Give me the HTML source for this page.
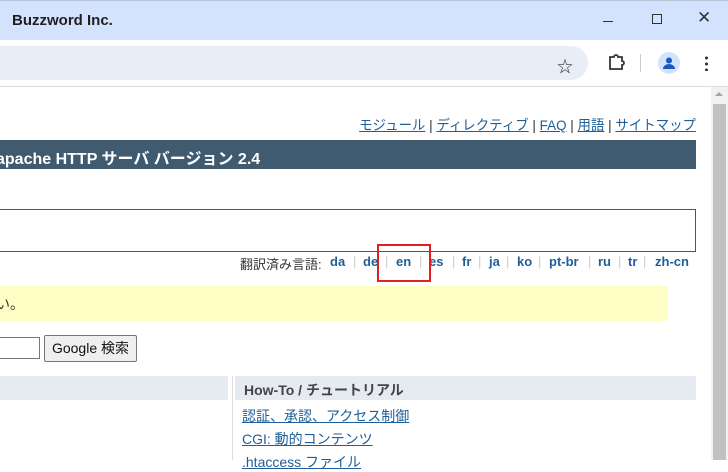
<!DOCTYPE html>
<html><head><meta charset="utf-8"><style>
*{margin:0;padding:0;box-sizing:border-box}
body{width:728px;height:460px;overflow:hidden;background:#fff;font-family:"Liberation Sans","Noto Sans CJK JP",sans-serif;position:relative}
.a{position:absolute}
.lk{color:#1f5f99;text-decoration:underline;font-size:14px}
.l{position:absolute;top:254px;font-size:13px;font-weight:bold;color:#1f5f99}
.s{position:absolute;top:254px;font-size:13px;color:#ccc}
</style></head><body>
<div class="a" style="left:0;top:0;width:728px;height:40px;background:#d3e3fd;border-top:1px solid #b8c4d6"></div>
<div class="a" style="left:12px;top:12px;font-size:15px;font-weight:bold;color:#1f1f1f">Buzzword Inc.</div>
<div class="a" style="left:603px;top:21px;width:10px;height:1px;background:#333"></div>
<div class="a" style="left:652px;top:14px;width:10px;height:10px;border:1px solid #333"></div>
<div class="a" style="left:697px;top:8px;font-size:17px;color:#333">✕</div>
<div class="a" style="left:0;top:40px;width:728px;height:47px;background:#fff;border-bottom:1px solid #dcdcdc"></div>
<div class="a" style="left:-30px;top:46px;width:618px;height:34px;background:#e9eef6;border-radius:17px"></div>
<div class="a" style="left:557px;top:53px;font-size:16px;color:#333">☆</div>
<svg class="a" style="left:606px;top:53px" width="20" height="20" viewBox="0 0 20 20"><path d="M4 4h4a2 2 0 0 1 4 0h4v4a2 2 0 0 1 0 4v4H4z" fill="none" stroke="#333" stroke-width="1.8"/></svg>
<div class="a" style="left:640px;top:54px;width:1px;height:18px;background:#ccc"></div>
<div class="a" style="left:658px;top:52px;width:22px;height:22px;border-radius:50%;background:#d3e3fd"></div>
<svg class="a" style="left:658px;top:52px" width="22" height="22"><circle cx="11" cy="8.5" r="3" fill="#1a57c0"/><path d="M5 17a6 5 0 0 1 12 0z" fill="#1a57c0"/></svg>
<div class="a" style="left:705px;top:55px;width:3px;height:16px;background:radial-gradient(circle,#333 1.4px,transparent 1.6px) 0 0/3px 6px"></div>
<div class="a" style="left:711px;top:87px;width:17px;height:373px;background:#f1f1f1"></div>
<div class="a" style="left:713px;top:104px;width:13px;height:356px;background:#c1c1c1"></div>
<div class="a" style="left:715px;top:92px;width:0;height:0;border:4px solid transparent;border-bottom:4px solid #a3a3a3;border-top:0"></div>
<div class="a" style="left:0;top:115px;width:696px;text-align:right;font-size:14px;color:#333;transform:scaleX(.96);transform-origin:right"><span class="lk">モジュール</span> | <span class="lk">ディレクティブ</span> | <span class="lk">FAQ</span> | <span class="lk">用語</span> | <span class="lk">サイトマップ</span></div>
<div class="a" style="left:0;top:140px;width:696px;height:29px;background:#405a6f"></div>
<div class="a" style="left:-4px;top:145px;font-size:16px;font-weight:bold;color:#fff">apache HTTP サーバ バージョン 2.4</div>
<div class="a" style="left:-2px;top:209px;width:698px;height:43px;border:1px solid #405a6f"></div>
<div class="a" style="left:240px;top:254px;font-size:13px;color:#333">翻訳済み言語:</div>
<span class="l" style="left:330px">da</span><span class="s" style="left:353px">|</span>
<span class="l" style="left:363px">de</span><span class="s" style="left:385px">|</span>
<span class="l" style="left:396px">en</span><span class="s" style="left:419px">|</span>
<span class="l" style="left:429px">es</span><span class="s" style="left:452px">|</span>
<span class="l" style="left:462px">fr</span><span class="s" style="left:478px">|</span>
<span class="l" style="left:489px">ja</span><span class="s" style="left:506px">|</span>
<span class="l" style="left:517px">ko</span><span class="s" style="left:538px">|</span>
<span class="l" style="left:549px">pt-br</span><span class="s" style="left:588px">|</span>
<span class="l" style="left:598px">ru</span><span class="s" style="left:618px">|</span>
<span class="l" style="left:628px">tr</span><span class="s" style="left:643px">|</span>
<span class="l" style="left:655px">zh-cn</span>
<div class="a" style="left:377px;top:244px;width:54px;height:38px;border:2px solid #e02020"></div>
<div class="a" style="left:0;top:286px;width:668px;height:35px;background:#ffffc5"></div>
<div class="a" style="left:-18px;top:294px;font-size:14px;color:#333">ない。</div>
<div class="a" style="left:-4px;top:337px;width:44px;height:22px;border:1px solid #767676;background:#fff"></div>
<div class="a" style="left:44px;top:335px;width:93px;height:27px;border:1px solid #767676;border-radius:2px;background:#efefef;font-size:14px;color:#111;text-align:center;line-height:25px">Google 検索</div>
<div class="a" style="left:0;top:376px;width:228px;height:24px;background:#e6ebf2"></div>
<div class="a" style="left:232px;top:376px;width:1px;height:84px;background:#ddd"></div>
<div class="a" style="left:235px;top:376px;width:461px;height:24px;background:#e6ebf2"></div>
<div class="a" style="left:244px;top:380px;font-size:14px;font-weight:bold;color:#444">How-To / チュートリアル</div>
<div class="a lk" style="left:242px;top:406px">認証、承認、アクセス制御</div>
<div class="a lk" style="left:242px;top:429px">CGI: 動的コンテンツ</div>
<div class="a lk" style="left:242px;top:452px">.htaccess ファイル</div>
</body></html>
